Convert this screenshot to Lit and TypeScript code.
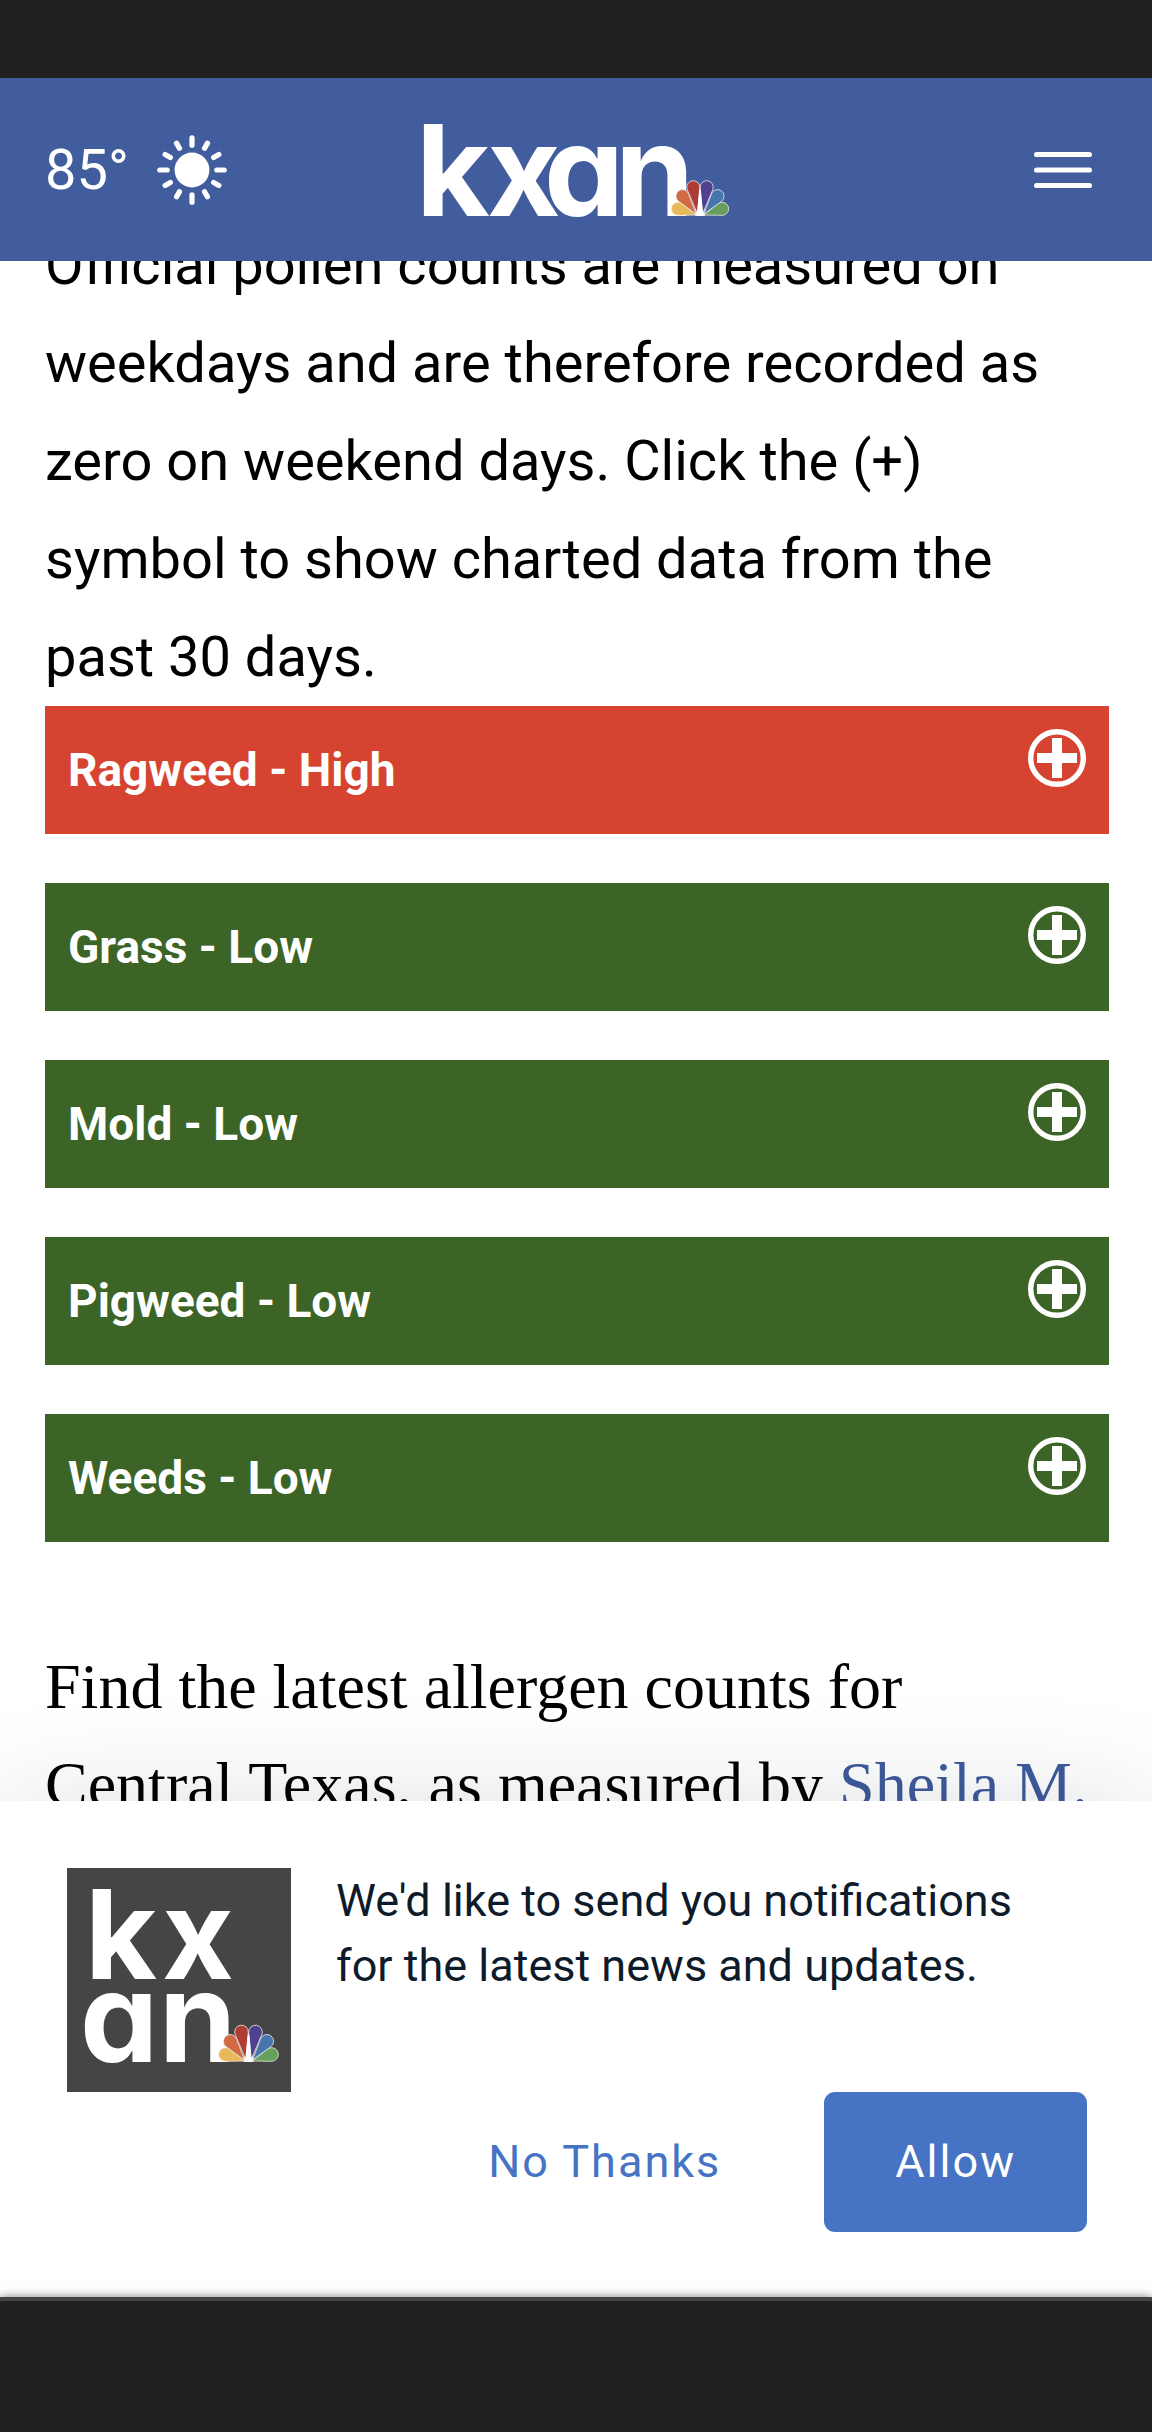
import { LitElement, html, svg, css } from "lit";
import { customElement, property } from "lit/decorators.js";
import { classMap } from "lit/directives/class-map.js";

type Level = "High" | "Low";

interface Pollen {
  name: string;
  level: Level;
}

const POLLEN: Pollen[] = [
  { name: "Ragweed", level: "High" },
  { name: "Grass", level: "Low" },
  { name: "Mold", level: "Low" },
  { name: "Pigweed", level: "Low" },
  { name: "Weeds", level: "Low" },
];

interface Feather {
  cx: number;
  cy: number;
  tx: number;
  ty: number;
  fill: string;
}

// Feather heads and tips, measured from the middle of the fan's base.
const FEATHERS: Feather[] = [
  { cx: -23, cy: -7.5, tx: -4, ty: -1, fill: "#e9b859" },
  { cx: 23, cy: -7.5, tx: 4, ty: -1, fill: "#67a05c" },
  { cx: -18.3, cy: -20.7, tx: -4, ty: -2, fill: "#d26a44" },
  { cx: 18.3, cy: -20.7, tx: 4, ty: -2, fill: "#4675b0" },
  { cx: -7, cy: -30, tx: -2.5, ty: -2, fill: "#b03c37" },
  { cx: 7, cy: -30, tx: 2.5, ty: -2, fill: "#513f8f" },
];

// Teardrop: two tangents from the tip to a round head.
const teardrop = ({ cx, cy, tx, ty }: Feather, r = 6.8) => {
  const theta = Math.atan2(ty - cy, tx - cx);
  const spread = Math.acos(r / Math.hypot(tx - cx, ty - cy));
  const at = (angle: number) =>
    `${(cx + r * Math.cos(angle)).toFixed(2)} ${(cy + r * Math.sin(angle)).toFixed(2)}`;
  return `M${tx} ${ty}L${at(theta + spread)}A${r} ${r} 0 1 1 ${at(theta - spread)}Z`;
};

const peacock = (x: number, y: number, scale: number) => svg`
  <g transform="translate(${x} ${y}) scale(${scale})">
    <path d="M-5 0L-4 -24L0 -30L4 -24L5 0Z" fill="#fff" />
    ${FEATHERS.map(
      (f) => svg`<path d=${teardrop(f)} fill=${f.fill} stroke="#f2efe6" stroke-width="0.8" stroke-linejoin="round" />`,
    )}
    <path d="M-3.5 0L-0.8 -27L0.8 -27L3.5 0Z" fill="#fff" />
  </g>
`;

@customElement("pollen-row")
export class PollenRow extends LitElement {
  @property() name = "";
  @property() level: Level = "Low";

  static styles = css`
    :host {
      display: block;
    }
    .row {
      display: flex;
      align-items: center;
      justify-content: space-between;
      width: 100%;
      height: 128px;
      padding: 0 23px;
      border: 0;
      background: #3c6426;
      color: #fff;
      font: 700 46px/54px Roboto, sans-serif;
      text-align: left;
      cursor: pointer;
    }
    .high {
      background: #d64431;
    }
    .plus {
      align-self: flex-start;
      width: 58px;
      height: 58px;
      margin-top: 23px;
    }
  `;

  render() {
    return html`
      <button class=${classMap({ row: true, high: this.level === "High" })} type="button">
        <span>${this.name} - ${this.level}</span>
        <svg class="plus" viewBox="0 0 58 58" aria-hidden="true">
          <circle cx="29" cy="29" r="26.3" fill="none" stroke="#fff" stroke-width="5.4" />
          <path d="M24 9h10v15h15v10H34v15H24V34H9V24h15z" fill="#fff" />
        </svg>
      </button>
    `;
  }
}

@customElement("site-header")
export class SiteHeader extends LitElement {
  static styles = css`
    :host {
      display: block;
    }
    .header {
      display: grid;
      grid-template-columns: 1fr auto 1fr;
      align-items: center;
      height: 183px;
      padding: 0 60px 0 45px;
      background: #425d9d;
      color: #fff;
    }
    .weather {
      display: flex;
      align-items: center;
      gap: 28px;
      color: #fff;
      font: 400 56px/66px Roboto, sans-serif;
      text-decoration: none;
    }
    .sun {
      width: 70px;
      height: 70px;
    }
    .brand {
      display: block;
      width: 307px;
      height: 94px;
      margin-left: 15px;
    }
    .logo {
      display: block;
      width: 100%;
      height: 100%;
      overflow: visible;
    }
    .letters {
      font: 700 127px Inter, sans-serif;
      font-feature-settings: "cv11";
      fill: #fff;
    }
    .menu {
      justify-self: end;
      padding: 0;
      border: 0;
      background: none;
      cursor: pointer;
    }
    .lines {
      display: block;
      width: 58px;
      height: 38px;
    }
  `;

  render() {
    const rays = Array.from({ length: 12 }, (_, i) => i);
    return html`
      <header class="header">
        <a class="weather" href="#weather">
          <span>85°</span>
          <svg class="sun" viewBox="-35 -35 70 70" aria-hidden="true">
            <circle r="17.4" fill="#fff" />
            ${rays.map(
              (i) => svg`<line y1=${i % 3 ? -25 : -24.8} y2=${i % 3 ? -31 : -32.2}
                transform="rotate(${i * 30})" stroke="#fff" stroke-width="5.2" stroke-linecap="round" />`,
            )}
          </svg>
        </a>
        <a class="brand" href="#home">
          <svg class="logo" viewBox="0 0 307 94">
            <text class="letters" x="-7 64 121 192" y="93">kxan</text>
            ${peacock(277, 93, 0.96)}
          </svg>
        </a>
        <button class="menu" type="button" aria-label="Menu">
          <svg class="lines" viewBox="0 0 58 38" aria-hidden="true">
            <path d="M2.6 3.5h52.8M2.6 19h52.8M2.6 34.5h52.8" stroke="#fff" stroke-width="5.2" stroke-linecap="round" />
          </svg>
        </button>
      </header>
    `;
  }
}

@customElement("notify-prompt")
export class NotifyPrompt extends LitElement {
  static styles = css`
    :host {
      display: block;
    }
    .prompt {
      display: grid;
      grid-template-columns: 224px 1fr;
      column-gap: 45px;
      padding: 67px 65px 65px 67px;
      background: #fff;
      box-shadow: 0 0 110px -12px rgba(14, 27, 43, 0.17);
    }
    .tile {
      width: 224px;
      height: 224px;
      overflow: visible;
    }
    .letters {
      font: 700 124px Inter, sans-serif;
      font-feature-settings: "cv11";
      fill: #fff;
    }
    .message {
      margin: 0;
      color: #0e1b2b;
      font: 400 45px/65px Roboto, sans-serif;
    }
    .actions {
      grid-column: 1 / -1;
      display: flex;
      justify-content: flex-end;
      gap: 32px;
    }
    .action {
      height: 140px;
      padding: 0 71px;
      border: 0;
      border-radius: 11px;
      background: none;
      color: #4673c3;
      font: 400 45px/54px Roboto, sans-serif;
      letter-spacing: 2px;
      cursor: pointer;
    }
    .primary {
      background: #4673c3;
      color: #fff;
    }
  `;

  render() {
    return html`
      <section class="prompt" role="dialog" aria-labelledby="message">
        <svg class="tile" viewBox="0 0 224 224">
          <rect width="224" height="224" fill="#454545" />
          <text class="letters" x="18 95" y="111">kx</text>
          <text class="letters" x="13 92" y="194">an</text>
          ${peacock(181.5, 194, 1)}
        </svg>
        <p class="message" id="message">
          We'd like to send you notifications<br />for the latest news and updates.
        </p>
        <div class="actions">
          <button class="action" type="button">No Thanks</button>
          <button class="action primary" type="button">Allow</button>
        </div>
      </section>
    `;
  }
}

@customElement("app-root")
export class AppRoot extends LitElement {
  static styles = css`
    :host {
      display: flex;
      flex-direction: column;
      height: 100vh;
      background: #fff;
      overflow: hidden;
    }
    .system {
      flex: none;
      position: relative;
      z-index: 2;
      background: #202020;
    }
    .status {
      height: 78px;
    }
    .navigation {
      height: 131px;
      border-top: 4px solid #444;
      box-shadow: 0 0 9px rgba(0, 0, 0, 0.5);
    }
    .top,
    .bottom {
      flex: none;
      position: relative;
      z-index: 1;
    }
    .article {
      flex: 1 1 0;
      min-height: 0;
      margin-top: -45px;
      padding: 0 43px 0 45px;
      color: #000;
    }
    .intro {
      margin: 0;
      font: 400 56px/98px Roboto, sans-serif;
    }
    .levels {
      display: grid;
      gap: 49px;
      margin: 0;
      padding: 0;
      list-style: none;
    }
    .story {
      margin: 96px 0 0;
      font: 400 64px/98px "Liberation Serif", serif;
    }
    .link {
      color: #3f5a9c;
      text-decoration: none;
    }
  `;

  render() {
    return html`
      <div class="system status"></div>
      <site-header class="top"></site-header>
      <main class="article">
        <p class="intro">
          Official pollen counts are measured on weekdays and are therefore recorded as zero on weekend days. Click the
          (+) symbol to show charted data from the past 30 days.
        </p>
        <ul class="levels">
          ${POLLEN.map(
            (p) => html`<li><pollen-row name=${p.name} level=${p.level}></pollen-row></li>`,
          )}
        </ul>
        <p class="story">
          Find the latest allergen counts for<br />Central Texas, as measured by
          <a class="link" href="#sheila">Sheila M.</a>
        </p>
      </main>
      <notify-prompt class="bottom"></notify-prompt>
      <div class="system navigation"></div>
    `;
  }
}
